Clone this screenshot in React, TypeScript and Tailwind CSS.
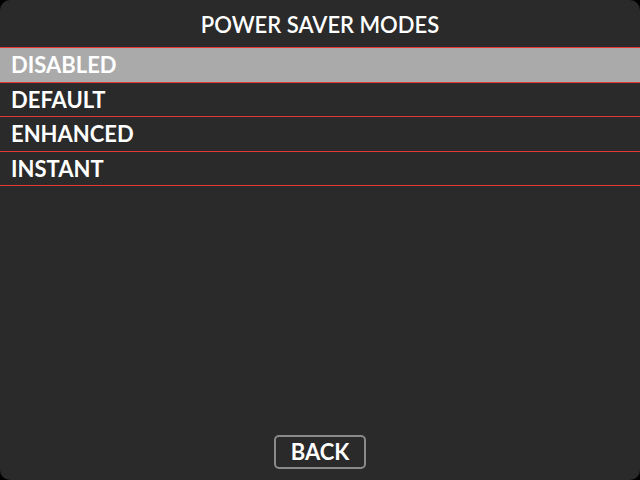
export default function App() {
  const items = [
    { label: "DISABLED", h: "h-[35px]" },
    { label: "DEFAULT", h: "h-[34px]" },
    { label: "ENHANCED", h: "h-[35px]" },
    { label: "INSTANT", h: "h-[34px]" },
  ];
  return (
    <div className="w-[640px] h-[480px] bg-black" style={{ fontFamily: "Lato, 'Open Sans', sans-serif" }}>
      <div className="w-full h-full rounded-[10px] bg-[#2a2a2a] flex flex-col overflow-hidden">
        <div className="h-[47px] flex items-center justify-center text-white text-[22px] font-semibold leading-none pt-[2px]">
          POWER SAVER MODES
        </div>
        <div className="border-t border-[#e53935]">
          {items.map((it, i) => (
            <div
              key={it.label}
              className={
                it.h +
                " border-b border-[#e53935] flex items-center pl-[11px] text-[22px] font-bold leading-none text-white " +
                (i === 0 ? "bg-[#aaaaaa]" : "")
              }
            >
              {it.label}
            </div>
          ))}
        </div>
        <div className="flex-1" />
        <div className="flex justify-center pb-[11px]">
          <div className="w-[92px] h-[34px] border-2 border-[#8a8a8a] rounded-[5px] flex items-center justify-center text-white text-[22px] font-bold leading-none">
            BACK
          </div>
        </div>
      </div>
    </div>
  );
}
